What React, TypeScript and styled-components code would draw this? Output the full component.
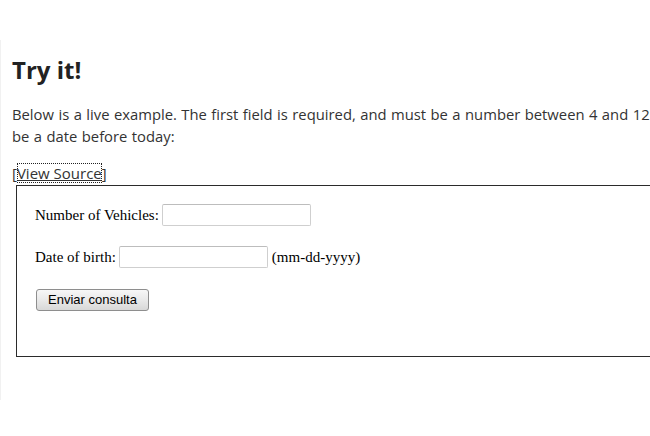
import { createGlobalStyle } from 'styled-components';
import styled from 'styled-components';

const GlobalStyle = createGlobalStyle`
  html, body {
    margin: 0;
    padding: 0;
    background: #ffffff;
    overflow: hidden;
  }
  body {
    width: 650px;
    height: 436px;
  }
`;

const Page = styled.div`
  margin-top: 40px;
  height: 360px;
  border-left: 1px solid #f1f1f1;
  padding-left: 11px;
  font-family: 'Open Sans', 'Noto Sans', sans-serif;
  color: #333;
`;

const Title = styled.h2`
  margin: 0;
  padding-top: 14px;
  font-size: 24px;
  font-weight: 700;
  line-height: 32px;
  color: #222;
`;

const Intro = styled.p`
  margin: 17px 0 0;
  font-size: 14.8px;
  word-spacing: 0.6px;
  line-height: 22px;
  white-space: nowrap;
`;

const SourceLine = styled.div`
  margin-top: 14px;
  font-size: 15px;
  line-height: 24px;
`;

const SourceLink = styled.a`
  color: #333;
  text-decoration: underline;
  outline: 1px dotted #222;
  outline-offset: -1px;
`;

const Demo = styled.div`
  margin-left: 4px;
  width: 700px;
  height: 172px;
  border: 1px solid #2b2b2b;
  padding: 18px 18px 0;
  box-sizing: border-box;
  display: flex;
  flex-direction: column;
  gap: 20px;
  font-family: 'Liberation Serif', 'Times New Roman', serif;
  font-size: 15px;
  color: #000;
`;

const Row = styled.div`
  display: flex;
  align-items: center;
  height: 22px;
  gap: 3px;
`;

const Field = styled.input`
  width: 149px;
  height: 22px;
  box-sizing: border-box;
  border: 1px solid #cfcfcf;
  border-top-color: #bdbdbd;
  border-radius: 2px;
  padding: 2px 3px;
  background: #fff;
  font: inherit;
`;

const Hint = styled.span`
  margin-left: 1px;
`;

const Submit = styled.button`
  margin-top: 1px;
  margin-left: 1px;
  width: 113px;
  height: 22px;
  padding: 0;
  border: 1px solid #8e8e8e;
  border-radius: 3px;
  background: linear-gradient(#f7f7f7, #e9e9e9 50%, #d8d8d8);
  font-family: 'Liberation Sans', Arial, sans-serif;
  font-size: 13px;
  color: #000;
`;

export default function App() {
  return (
    <>
      <GlobalStyle />
      <Page>
        <Title>Try it!</Title>
        <Intro>
          Below is a live example. The first field is required, and must be a number between 4 and 12
          <br />
          be a date before today:
        </Intro>
        <SourceLine>
          [<SourceLink href="#">View Source</SourceLink>]
        </SourceLine>
        <Demo>
          <Row>
            Number of Vehicles:
            <Field type="text" />
          </Row>
          <Row>
            Date of birth:
            <Field type="text" />
            <Hint>(mm-dd-yyyy)</Hint>
          </Row>
          <Row>
            <Submit type="submit">Enviar consulta</Submit>
          </Row>
        </Demo>
      </Page>
    </>
  );
}
